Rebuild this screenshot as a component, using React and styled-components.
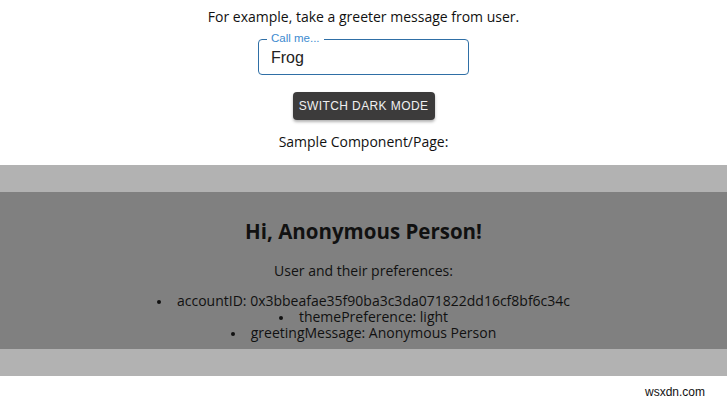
import React from "react";
import styled, { createGlobalStyle } from "styled-components";

const Global = createGlobalStyle`
  html, body { margin: 0; padding: 0; background: #fff; }
  body { font-family: "Open Sans", "Noto Sans", sans-serif; color: #111; }
`;

const Page = styled.div`
  position: relative;
  width: 727px;
  height: 408px;
  overflow: hidden;
`;

const Top = styled.section`
  display: flex;
  flex-direction: column;
  align-items: center;
  padding-top: 7px;
`;

const Line = styled.p`
  margin: ${(p) => p.$mt || 0}px 0 0;
  font-size: 14px;
  line-height: 20px;
  text-align: center;
  color: #111;
`;

const Field = styled.div`
  position: relative;
  margin: 12px 0 0;
  width: 211px;
  height: 36px;
  box-sizing: border-box;
  border: 1px solid #2f6fa6;
  border-radius: 4px;
  padding: 0 12px;
  display: flex;
  align-items: center;
`;

const Label = styled.span`
  position: absolute;
  top: -8px;
  left: 8px;
  padding: 0 4px;
  background: #fff;
  font-family: "Liberation Sans", Arial, sans-serif;
  font-size: 11.5px;
  line-height: 13px;
  color: #3d8bd0;
`;

const Value = styled.span`
  font-family: "Liberation Sans", Arial, sans-serif;
  font-size: 16px;
  color: #222;
  margin-top: 1px;
`;

const Button = styled.button`
  margin-top: 17px;
  width: 142px;
  height: 28px;
  border: none;
  border-radius: 4px;
  background: #3c3b3b;
  color: #f0f0f0;
  font-family: "Liberation Sans", Arial, sans-serif;
  font-size: 12px;
  letter-spacing: 0.4px;
  text-transform: uppercase;
  box-shadow: 0 2px 3px rgba(0, 0, 0, 0.3);
  padding: 0;
`;

const Band = styled.section`
  margin-top: 13px;
  background: #b2b2b2;
  padding: 27px 0;
`;

const Panel = styled.div`
  background: #808080;
  height: 157px;
  box-sizing: border-box;
  padding-top: 26px;
  display: flex;
  flex-direction: column;
  align-items: center;
  color: #111;
`;

const Heading = styled.h2`
  margin: 0;
  font-size: 20.5px;
  line-height: 26px;
  font-weight: 700;
`;

const List = styled.ul`
  margin: 12px 0 0;
  padding: 0;
  list-style: none;
  display: flex;
  flex-direction: column;
  align-items: center;
`;

const Item = styled.li`
  font-size: 14px;
  line-height: 16px;
  display: flex;
  align-items: center;
  &::before {
    content: "";
    width: 4px;
    height: 4px;
    border-radius: 50%;
    background: #111;
    margin: 1px 16px 0 0;
  }
`;

const Watermark = styled.div`
  position: absolute;
  right: 22px;
  bottom: 9px;
  font-family: "Liberation Sans", Arial, sans-serif;
  font-size: 12px;
  color: #111;
`;

const prefs = [
  "accountID: 0x3bbeafae35f90ba3c3da071822dd16cf8bf6c34c",
  "themePreference: light",
  "greetingMessage: Anonymous Person",
];

export default function App() {
  return (
    <Page>
      <Global />
      <Top>
        <Line>For example, take a greeter message from user.</Line>
        <Field>
          <Label>Call me...</Label>
          <Value>Frog</Value>
        </Field>
        <Button>Switch Dark Mode</Button>
        <Line $mt={12}>Sample Component/Page:</Line>
      </Top>
      <Band>
        <Panel>
          <Heading>Hi, Anonymous Person!</Heading>
          <Line $mt={17}>User and their preferences:</Line>
          <List>
            {prefs.map((p) => (
              <Item key={p}>{p}</Item>
            ))}
          </List>
        </Panel>
      </Band>
      <Watermark>wsxdn.com</Watermark>
    </Page>
  );
}
